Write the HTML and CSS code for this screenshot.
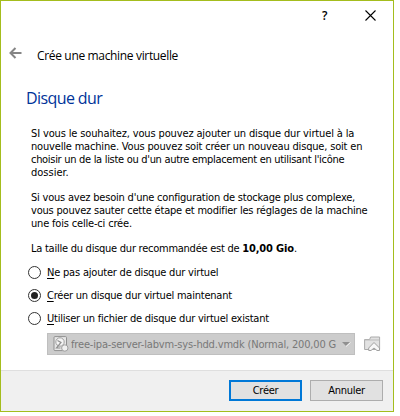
FILE: index.html
```html
<!DOCTYPE html>
<html lang="fr">
<head>
<meta charset="utf-8">
<title>Crée une machine virtuelle</title>
<link rel="stylesheet" href="styles.css">
</head>
<body>
<main class="window">
  <header class="titlebar">
    <span class="help">?</span>
    <svg class="close" width="11" height="11" viewBox="0 0 11 11"><path d="M.5 .5l10 10M10.500 .5l-10 10" stroke="#000" stroke-width="1.1"/></svg>
  </header>
  <div class="heading">
    <svg width="13" height="12" viewBox="0 0 13 12" fill="none" stroke="#858585" stroke-width="2"><path d="M12.500 6H1.500M6.500 1L1.500 6l5 5"/></svg>
    <span class="wizard">Crée une machine virtuelle</span>
  </div>
  <h1>Disque dur</h1>
  <section class="content">
    <p><span class="l1">SI vous le souhaitez, vous pouvez ajouter un disque dur virtuel à la</span><br><span class="l2">nouvelle machine. Vous pouvez soit créer un nouveau disque, soit en</span><br><span class="l3">choisir un de la liste ou d'un autre emplacement en utilisant l'icône</span><br><span class="l4">dossier.</span></p>
    <p><span class="l5">Si vous avez besoin d'une configuration de stockage plus complexe,</span><br><span class="l6">vous pouvez sauter cette étape et modifier les réglages de la machine</span><br><span class="l7">une fois celle-ci crée.</span></p>
    <p><span class="l8">La taille du disque dur recommandée est de </span><b>10,00 Gio</b>.</p>
  </section>
  <section class="options">
    <div class="option"><i class="radio"></i><span class="o1"><u>N</u>e pas ajouter de disque dur virtuel</span></div>
    <div class="option"><i class="radio on"></i><span class="o2"><u>C</u>réer un disque dur virtuel maintenant</span></div>
    <div class="option"><i class="radio"></i><span class="o3"><u>U</u>tiliser un fichier de disque dur virtuel existant</span></div>
  </section>
  <div class="picker">
    <div class="combo">
      <svg width="16" height="16" viewBox="0 0 16 16"><rect x="1" y=".6" width="12.500" height="14" rx="1" fill="#e6e6e6" stroke="#909090"/><circle cx="7" cy="6" r="4.200" fill="#f4f4f4" stroke="#a0a0a0"/><path d="M4.500 4.500L8 6.500 3.500 12h4" fill="none" stroke="#909090" stroke-width="1.200"/><circle cx="11.800" cy="12" r="3.200" fill="#f0f0f0" stroke="#a0a0a0"/></svg>
      <span class="file">free-ipa-server-labvm-sys-hdd.vmdk (Normal, 200,00 G</span>
      <svg class="arrow" width="9" height="5" viewBox="0 0 9 5"><path d="M0 0h8L4 4z" fill="#909090"/><path d="M4 4.500L8.500 .5" fill="none" stroke="#f5f5f5"/></svg>
    </div>
    <svg class="folder" width="17" height="16" viewBox="0 0 17 16"><path d="M.6 13.500V3.500h5l1-2.500h9v12.500z" fill="#e2e2e2" stroke="#aaa"/><path d="M1 4h14.500" stroke="#bbb"/><path d="M10 6.500l5.500 5.500v2.500h-2.500l-3-2.500-3 2.500H4.700v-2.500z" fill="#f7f7f7" stroke="#a0a0a0"/></svg>
  </div>
  <footer>
    <button class="primary">Créer</button>
    <button>Annuler</button>
  </footer>
</main>
</body>
</html>
```
FILE: styles.css
```css
* { box-sizing: border-box; }
body { margin: 0; background: #fff; color: #000; font: 11px/13px "DejaVu Sans Condensed", "DejaVu Sans", sans-serif; font-stretch: condensed; }
svg { display: block; flex: none; }
span { white-space: pre; }
.window { width: 394px; height: 412px; border: 1px solid #a4bd1d; display: flex; flex-direction: column; background: #fff; }
.titlebar { height: 30px; display: flex; align-items: center; justify-content: flex-end; padding-right: 17px; gap: 36px; flex: none; }
.help { font: 600 12px/14px "Open Sans", sans-serif; width: 7px; margin-top: -1px; }
.close { margin-top: -1px; }
.heading { display: flex; height: 44px; align-items: center; padding-left: 8px; gap: 15px; flex: none; }
.wizard { font: 12px/18px "Open Sans", sans-serif; margin-top: 5px; letter-spacing: -.34px; }
h1 { font: 16px/24px "Open Sans", sans-serif; color: #039; margin: 11px 0 0 25px; height: 24px; flex: none; letter-spacing: -.6px; }
.content { padding: 17px 0 0 30px; height: 145px; flex: none; white-space: nowrap; }
p { margin: 0 0 12px; }
.l1 { letter-spacing: -.14px; }
.l2, .l7 { letter-spacing: -.18px; }
.l6 { letter-spacing: -.2px; }
.l3 { letter-spacing: -.3px; }
.l5 { letter-spacing: -.21px; }
.l8 { letter-spacing: -.25px; }
b { letter-spacing: -.16px; }
.o1 { letter-spacing: -.2px; }
.o2, .o3 { letter-spacing: -.23px; }
.options { padding-left: 27px; flex: none; margin-top: 6px; }
.option { height: 23px; display: flex; align-items: center; gap: 6px; }
.radio { width: 13px; height: 13px; border: 1px solid #333; border-radius: 50%; display: flex; align-items: center; justify-content: center; }
.on::after { content: ""; width: 7px; height: 7px; border-radius: 50%; background: #222; }
u { text-underline-offset: 2px; text-decoration-thickness: 1px; text-decoration-skip-ink: none; }
.picker { display: flex; margin: 3px 0 0 46px; height: 22px; align-items: center; gap: 9px; flex: none; }
.combo { width: 308px; height: 22px; background: #ccc; border: 1px solid #bfbfbf; display: flex; align-items: center; padding-left: 5px; color: #787878; }
.file { width: 268px; overflow: hidden; margin-left: 2px; letter-spacing: -.17px; }
.arrow { margin-left: 3px; }
footer { margin-top: auto; height: 41px; flex: none; background: #f0f0f0; border-top: 1px solid #dfdfdf; display: flex; gap: 8px; justify-content: flex-end; padding: 9px 10px 0 0; }
button { width: 73px; height: 21px; padding: 0; border: 1px solid #adadad; background: #e1e1e1; font: inherit; letter-spacing: -.3px; color: #000; }
.primary { border: 2px solid #0078d7; }
```
